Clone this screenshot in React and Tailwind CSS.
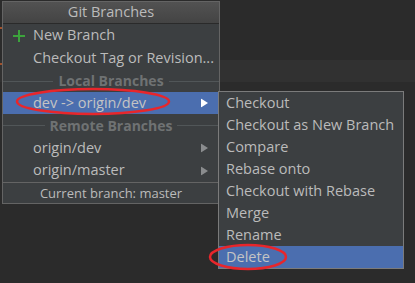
import React from 'react';

const font = { fontFamily: '"Open Sans", "DejaVu Sans", sans-serif' };

function Arrow({ active }) {
    return (
        <svg width="7" height="9" viewBox="0 0 7 9" className="absolute right-[11px] top-1/2 -translate-y-1/2">
            <path d="M0 0 L7 4.5 L0 9 Z" fill={active ? '#ffffff' : '#8a8c8e'} />
        </svg>
    );
}

function Row({ label, h, active, arrow, icon }) {
    return (
        <div className={`relative flex items-center pl-[30px] text-[14.5px] ${h} ${active ? 'bg-[#4b6eaf] text-[#c4c4c4]' : 'text-[#bbbbbb]'}`}>
            {icon && (
                <svg width="12" height="12" viewBox="0 0 12 12" className="absolute left-[10px] top-1/2 -translate-y-1/2">
                    <path d="M6 0 V12 M0 6 H12" stroke="#3ca33c" strokeWidth="2" />
                </svg>
            )}
            <span className="leading-none">{label}</span>
            {arrow && <Arrow active={active} />}
        </div>
    );
}

function Header({ label, h }) {
    return (
        <div className={`flex items-center gap-[5px] ${h}`}>
            <div className="flex-1 h-px bg-[#515658]" />
            <span className="text-[14px] font-bold text-[#6f7273] leading-none">{label}</span>
            <div className="flex-1 h-px bg-[#515658]" />
        </div>
    );
}

function SubItem({ label, active }) {
    return (
        <div className={`flex items-center h-[22px] pl-[7px] text-[14.5px] ${active ? 'bg-[#4b6eaf] text-[#c4c4c4]' : 'text-[#bbbbbb]'}`}>
            <span className="leading-none">{label}</span>
        </div>
    );
}

export default function App() {
    return (
        <div className="relative w-[415px] h-[283px] bg-[#2b2b2b] overflow-hidden" style={font}>
            {/* editor backdrop */}
            <div className="absolute left-0 right-0 top-[60px] h-[22px] bg-[#313131]" />
            <div className="absolute left-0 top-[27px] w-[2px] h-[2px] bg-[#a0522d]" />
            <div className="absolute left-0 top-[63px] w-[2px] h-[2px] bg-[#a0522d]" />

            {/* Git Branches popup */}
            <div className="absolute left-[2px] top-[1px] w-[218px] h-[203px] border border-[#646464] bg-[#3c3f41] flex flex-col">
                <div className="h-[22px] flex items-center justify-center bg-gradient-to-b from-[#525252] to-[#444444] border-b border-[#2a2a2a]">
                    <span className="text-[14.5px] text-[#bbbbbb] leading-none">Git Branches</span>
                </div>
                <Row label="New Branch" h="h-[23px]" icon />
                <Row label="Checkout Tag or Revision..." h="h-[23px]" />
                <Header label="Local Branches" h="h-[22px]" />
                <Row label="dev -> origin/dev" h="h-[22px]" active arrow />
                <Header label="Remote Branches" h="h-[23px]" />
                <Row label="origin/dev" h="h-[22px]" arrow />
                <Row label="origin/master" h="h-[23px]" arrow />
                <div className="flex-1 flex items-center justify-center border-t border-[#646464]">
                    <span className="text-[13px] text-[#bbbbbb] leading-none">Current branch: master</span>
                </div>
            </div>

            {/* submenu */}
            <div className="absolute left-[218px] top-[91px] w-[186px] border border-[#7b7b7b] bg-[#3c3f41] flex flex-col">
                <SubItem label="Checkout" />
                <SubItem label="Checkout as New Branch" />
                <SubItem label="Compare" />
                <SubItem label="Rebase onto" />
                <SubItem label="Checkout with Rebase" />
                <SubItem label="Merge" />
                <SubItem label="Rename" />
                <SubItem label="Delete" active />
            </div>

            {/* annotation ellipses */}
            <svg className="absolute left-0 top-0 pointer-events-none" width="415" height="283">
                <ellipse cx="93" cy="101.5" rx="76" ry="12.5" fill="none" stroke="#e8262b" strokeWidth="2.5" />
                <ellipse cx="248" cy="257" rx="38" ry="12" fill="none" stroke="#e8262b" strokeWidth="2.5" />
            </svg>
        </div>
    );
}
